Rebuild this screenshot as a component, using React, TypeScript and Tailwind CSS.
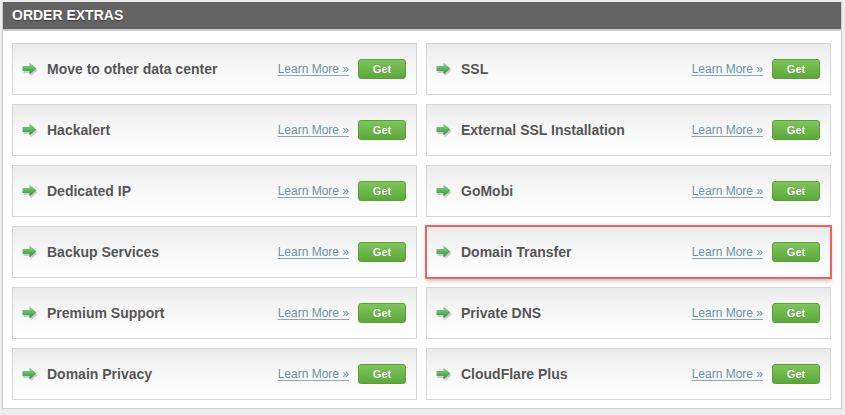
import React from "react";

const left = [
  "Move to other data center",
  "Hackalert",
  "Dedicated IP",
  "Backup Services",
  "Premium Support",
  "Domain Privacy",
];
const right = [
  "SSL",
  "External SSL Installation",
  "GoMobi",
  "Domain Transfer",
  "Private DNS",
  "CloudFlare Plus",
];

function Arrow() {
  return (
    <svg width="16" height="15" viewBox="0 0 16 15" className="shrink-0">
      <defs>
        <linearGradient id="ag" x1="0" y1="0" x2="0" y2="1">
          <stop offset="0" stopColor="#9ad895" />
          <stop offset="0.45" stopColor="#5fbb62" />
          <stop offset="1" stopColor="#2e8c40" />
        </linearGradient>
      </defs>
      <polygon points="1,5 8,5 8,1.5 15,7.5 8,13.5 8,10 1,10" fill="#000" opacity="0.18" transform="translate(0.5,1)" />
      <polygon points="0.5,4 7.5,4 7.5,0.5 14.5,6.5 7.5,12.5 7.5,9 0.5,9" fill="url(#ag)" />
    </svg>
  );
}

function Card({ name, highlight }: { name: string; highlight?: boolean }) {
  return (
    <div
      className={
        "h-[52px] flex items-center pl-[9px] pr-[10px] bg-gradient-to-b from-[#ebebeb] via-[#f8f8f8] to-white border " +
        (highlight
          ? "border-[#f0625a] shadow-[0_0_0_1px_#f0625a,0_3px_4px_rgba(0,0,0,0.25)]"
          : "border-[#d8d8d8]")
      }
    >
      <Arrow />
      <span className="ml-[9px] text-[14px] font-bold text-[#555] [text-shadow:0_1px_0_#fff] flex-1">
        {name}
      </span>
      <a className="text-[12px] text-[#6a93a6] underline underline-offset-[2px] decoration-[#8aa9b8] cursor-pointer">
        Learn More »
      </a>
      <button className="ml-[9px] w-[48px] h-[20px] rounded-[3px] border border-[#5b9f37] bg-gradient-to-b from-[#7fc55a] to-[#5ba93a] text-white text-[11px] font-bold [text-shadow:0_0_1px_rgba(0,0,0,0.3)]">
        Get
      </button>
    </div>
  );
}

export default function App() {
  return (
    <div
      className="w-[845px] h-[415px] bg-[#ececec] pt-[2px] pl-[2px]"
      style={{ fontFamily: '"Liberation Sans", Arial, Helvetica, sans-serif' }}
    >
      <div className="w-[840px] border border-[#cdcdcd] border-t-0 bg-white">
        <div className="h-[29px] bg-[#636363] flex items-center px-[9px] border-b-2 border-[#cccccc]">
          <span className="text-white font-bold text-[14px] [text-shadow:0_1px_1px_rgba(0,0,0,0.4)]">
            ORDER EXTRAS
          </span>
        </div>
        <div className="pt-[12px] pl-[9px] pr-[10px] pb-[8px] grid grid-cols-2 gap-x-[9px] gap-y-[9px]">
          {left.map((l, i) => (
            <React.Fragment key={l}>
              <Card name={l} />
              <Card name={right[i]} highlight={right[i] === "Domain Transfer"} />
            </React.Fragment>
          ))}
        </div>
      </div>
    </div>
  );
}
